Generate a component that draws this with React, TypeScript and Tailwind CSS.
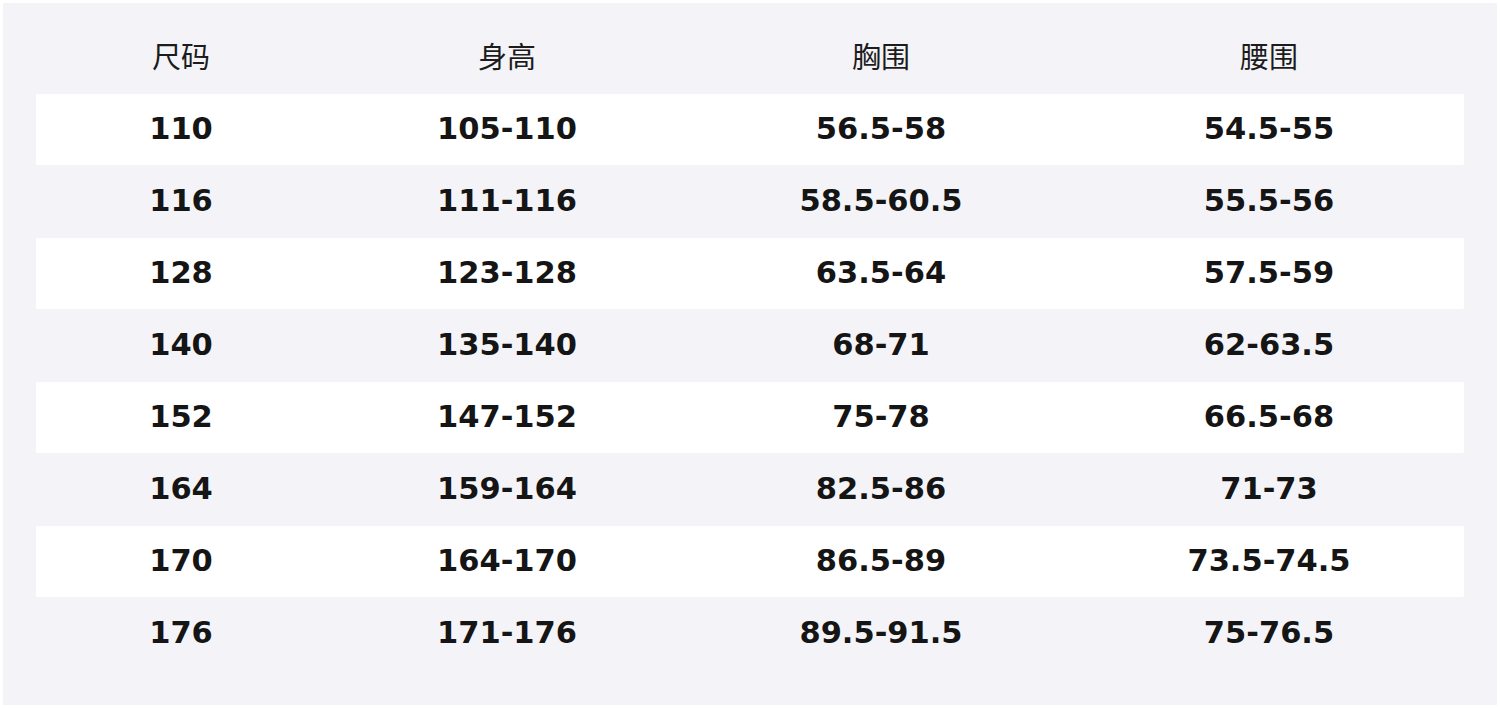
import React from "react";

const header = ["尺码", "身高", "胸围", "腰围"];
const rows = [
  ["110", "105-110", "56.5-58", "54.5-55"],
  ["116", "111-116", "58.5-60.5", "55.5-56"],
  ["128", "123-128", "63.5-64", "57.5-59"],
  ["140", "135-140", "68-71", "62-63.5"],
  ["152", "147-152", "75-78", "66.5-68"],
  ["164", "159-164", "82.5-86", "71-73"],
  ["170", "164-170", "86.5-89", "73.5-74.5"],
  ["176", "171-176", "89.5-91.5", "75-76.5"],
];

const cols = "grid grid-cols-[290px_362px_386px_390px]";

export default function App() {
  return (
    <div className="w-[1500px] h-[708px] bg-white p-[3px]">
      <div className="w-full h-full bg-[#f4f4f8] px-[33px] pt-[18px]">
        <div
          className={`${cols} h-[73px] pb-[3px] items-center text-[#1c1c1c] text-[29px]`}
          style={{ fontFamily: '"Noto Sans CJK SC", "Noto Sans", sans-serif' }}
        >
          {header.map((h) => (
            <div key={h} className="text-center">{h}</div>
          ))}
        </div>
        {rows.map((r, i) => (
          <div
            key={i}
            className={`${cols} items-center pb-[1px] font-bold text-[30.5px] text-[#151515] ${
              i % 2 === 0 ? "bg-white h-[71px] rounded-[2px]" : "bg-transparent h-[73px]"
            }`}
            style={{ fontFamily: '"DejaVu Sans", sans-serif' }}
          >
            {r.map((c, j) => (
              <div key={j} className="text-center">{c}</div>
            ))}
          </div>
        ))}
      </div>
    </div>
  );
}
